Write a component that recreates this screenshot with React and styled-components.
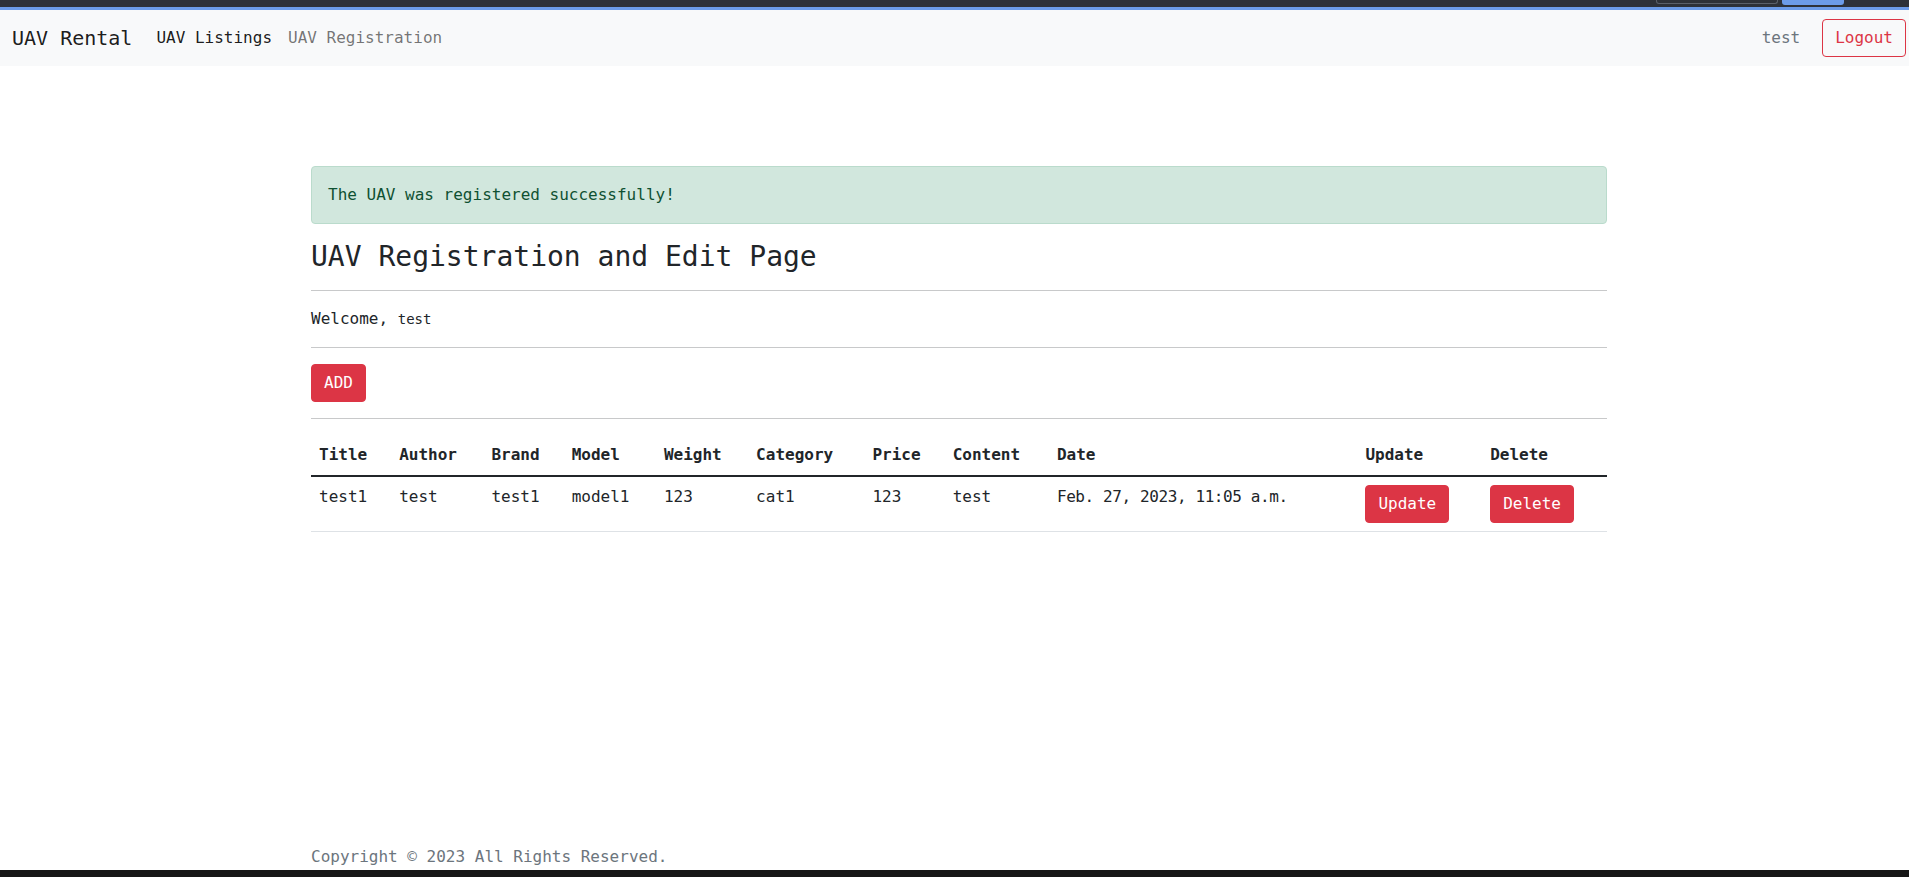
import React from "react";
import styled, { createGlobalStyle, css } from "styled-components";

const GlobalStyle = createGlobalStyle`
  html, body {
    margin: 0;
    padding: 0;
    overflow: hidden;
  }
  body {
    font-family: "DejaVu Sans Mono", "Liberation Mono", monospace;
    font-size: 16px;
    line-height: 1.5;
    color: #212529;
    background: #fff;
  }
  * {
    box-sizing: border-box;
  }
`;

// the captured page was a little wider than the window
const Page = styled.div`
  width: 1918px;
  height: 100vh;
  display: flex;
  flex-direction: column;
`;

const TopStrip = styled.div`
  height: 10px;
  flex-shrink: 0;
  background: #2e3138;
  border-bottom: 3px solid #6c9be8;
  display: flex;
  justify-content: flex-end;
  align-items: flex-start;
  gap: 4px;
  padding-right: 74px;
`;

const StripBox = styled.div`
  height: ${props => (props.filled ? "5px" : "4px")};
  width: ${props => props.width}px;
  border-radius: 0 0 3px 3px;
  ${props =>
    props.filled
      ? css`
          background: #6c9be8;
        `
      : css`
          border: 1px solid #5b606a;
          border-top: 0;
        `}
`;

const Navbar = styled.nav`
  height: 56px;
  flex-shrink: 0;
  background: #f8f9fa;
  display: flex;
  align-items: center;
  padding: 8px 12px;
`;

const Brand = styled.a`
  font-size: 20px;
  line-height: 30px;
  padding: 5px 0;
  margin-right: 16px;
  color: rgba(0, 0, 0, 0.9);
  text-decoration: none;
`;

const NavLinks = styled.div`
  display: flex;
`;

const NavLink = styled.a`
  padding: 8px;
  color: ${props => (props.active ? "rgba(0, 0, 0, 0.9)" : "rgba(0, 0, 0, 0.55)")};
  text-decoration: none;
`;

const NavRight = styled.div`
  margin-left: auto;
  display: flex;
  align-items: center;
  gap: 22px;
`;

const NavText = styled.span`
  color: #6c757d;
`;

const Button = styled.button`
  font-family: inherit;
  font-size: 16px;
  line-height: 24px;
  padding: 6px 12px;
  border-radius: 4px;
  border: 1px solid #dc3545;
  cursor: pointer;
  background: ${props => (props.outline ? "transparent" : "#dc3545")};
  color: ${props => (props.outline ? "#dc3545" : "#fff")};
`;

const Container = styled.div`
  width: 1320px;
  margin: 0 auto;
  padding: 0 12px;
`;

const Main = styled(Container)`
  margin-top: 100px;
`;

const Alert = styled.div`
  padding: 16px;
  margin-bottom: 16px;
  border: 1px solid #badbcc;
  border-radius: 4px;
  background: #d1e7dd;
  color: #0f5132;
`;

const Title = styled.h3`
  font-size: 28px;
  font-weight: 500;
  line-height: 1.2;
  margin: 0 0 8px;
`;

const Rule = styled.hr`
  margin: 16px 0;
  border: 0;
  border-top: 1px solid #c8c9ca;
`;

const Text = styled.p`
  margin: 0 0 16px;
  small {
    font-size: 0.875em;
  }
`;

const Table = styled.table`
  width: 100%;
  border-collapse: collapse;
  margin-bottom: 16px;
`;

const HeadCell = styled.th`
  text-align: left;
  font-weight: bold;
  padding: 8px;
  vertical-align: bottom;
  border-bottom: 2px solid #212529;
`;

const Cell = styled.td`
  padding: 8px;
  vertical-align: top;
  border-bottom: 1px solid #dee2e6;
  letter-spacing: ${props => (props.tight ? "-0.4px" : "normal")};
`;

const Footer = styled(Container)`
  margin-top: auto;
  color: #6c757d;
  line-height: 24px;
  padding-bottom: 1px;
`;

const BottomBar = styled.div`
  height: 7px;
  flex-shrink: 0;
  background: #161616;
`;

const columns = ["Title", "Author", "Brand", "Model", "Weight", "Category", "Price", "Content", "Date"];

const rows = [
  {
    id: 1,
    cells: ["test1", "test", "test1", "model1", "123", "cat1", "123", "test", "Feb. 27, 2023, 11:05 a.m."]
  }
];

export default function App() {
  return (
    <Page>
      <GlobalStyle />
      <TopStrip>
        <StripBox width={122} />
        <StripBox filled width={62} />
      </TopStrip>
      <Navbar>
        <Brand href="#">UAV Rental</Brand>
        <NavLinks>
          <NavLink href="#" active>
            UAV Listings
          </NavLink>
          <NavLink href="#">UAV Registration</NavLink>
        </NavLinks>
        <NavRight>
          <NavText>test</NavText>
          <Button outline>Logout</Button>
        </NavRight>
      </Navbar>

      <Main>
        <Alert>The UAV was registered successfully!</Alert>
        <Title>UAV Registration and Edit Page</Title>
        <Rule />
        <Text>
          Welcome, <small>test</small>
        </Text>
        <Rule />
        <Button>ADD</Button>
        <Rule />
        <Table>
          <thead>
            <tr>
              {columns.map(c => (
                <HeadCell key={c}>{c}</HeadCell>
              ))}
              <HeadCell>Update</HeadCell>
              <HeadCell>Delete</HeadCell>
            </tr>
          </thead>
          <tbody>
            {rows.map(row => (
              <tr key={row.id}>
                {row.cells.map((c, i) => (
                  <Cell key={i} tight={i === row.cells.length - 1}>
                    {c}
                  </Cell>
                ))}
                <Cell>
                  <Button>Update</Button>
                </Cell>
                <Cell>
                  <Button>Delete</Button>
                </Cell>
              </tr>
            ))}
          </tbody>
        </Table>
      </Main>

      <Footer>Copyright © 2023 All Rights Reserved.</Footer>
      <BottomBar />
    </Page>
  );
}
